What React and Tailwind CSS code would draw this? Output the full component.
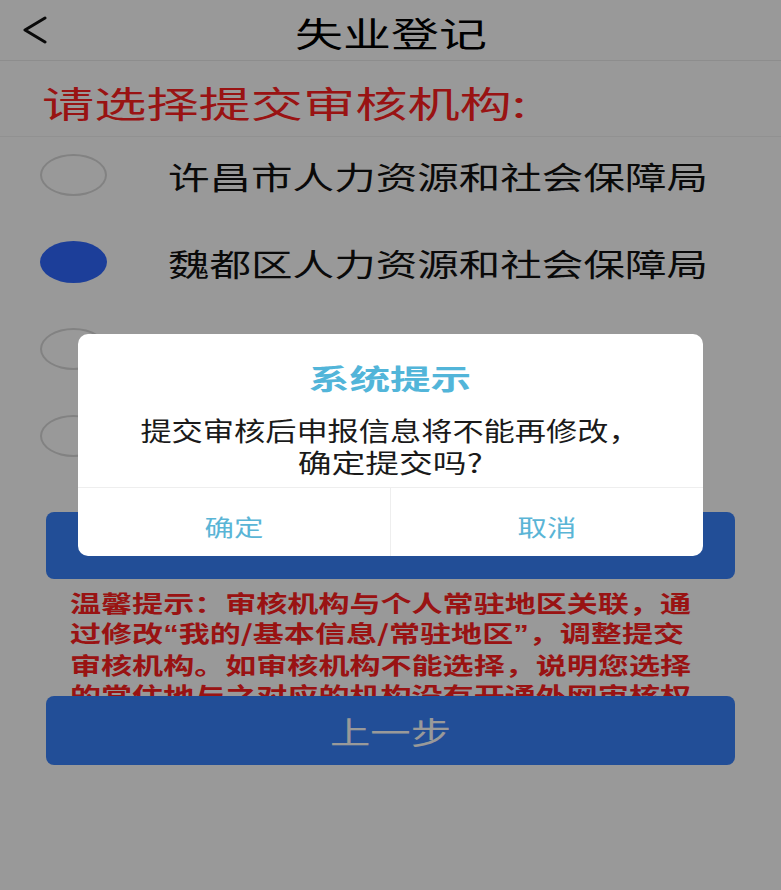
import React from 'react';

const orgs = [
  { name: '许昌市人力资源和社会保障局', checked: false },
  { name: '魏都区人力资源和社会保障局', checked: true },
  { name: '许昌市社会保险中心', checked: false },
  { name: '魏都区就业服务中心', checked: false },
];

// 引号用西文字体，避免全角引号撑开
const Q = ({ children }) => <span className="font-['Liberation_Sans',sans-serif]">{children}</span>;

const tipLines = [
  <>温馨提示：审核机构与个人常驻地区关联，通</>,
  <>过修改<Q>“</Q>我的/基本信息/常驻地区<Q>”</Q>，调整提交</>,
  <>审核机构。如审核机构不能选择，说明您选择</>,
  <>的常住地与之对应的机构没有开通外网审核权</>,
  <>限，请联系当地人社部门。</>,
];

const App = () => {
  return (
    <div className="relative h-[890px] overflow-hidden bg-white font-['Noto_Sans_CJK_SC','Noto_Sans',sans-serif]">
      {/* 顶部导航 */}
      <div className="grid h-[61px] grid-cols-[70px_1fr_70px] items-center border-b border-[#ececec]">
        <button className="flex h-full items-center pl-[22px]">
          <svg width="26" height="28" viewBox="0 0 26 28" fill="none">
            <path d="M23 2 L3 14 L23 26" stroke="#111" strokeWidth="3" strokeLinecap="round" strokeLinejoin="round" />
          </svg>
        </button>
        <div className="pt-[6px] text-center text-[34px] leading-none text-black">
          <span className="inline-block scale-x-[1.41]">失业登记</span>
        </div>
        <div />
      </div>

      {/* 标题 */}
      <div className="flex h-[76px] items-center border-b border-[#f2f2f2] pl-[42px] pt-[6px]">
        <span className="inline-block origin-left scale-x-[1.45] text-[36px] leading-none text-[#ff2020]">
          请选择提交审核机构:
        </span>
      </div>

      {/* 机构列表 */}
      <div className="flex flex-col gap-[11px]">
        {orgs.map((org) => (
          <div key={org.name} className="flex h-[76px] items-center pl-[40px]">
            <div
              className={
                org.checked
                  ? 'h-[42px] w-[67px] shrink-0 rounded-[50%] bg-[#2f68ff]'
                  : 'h-[42px] w-[67px] shrink-0 rounded-[50%] border-2 border-[#d9d9d9]'
              }
            />
            <span className="ml-[61px] inline-block origin-left scale-x-[1.34] whitespace-nowrap text-[31px] leading-none text-[#111]">
              {org.name}
            </span>
          </div>
        ))}
      </div>

      {/* 提交按钮 */}
      <button className="mx-[46px] mt-[38px] flex h-[67px] w-[689px] items-center justify-center rounded-[8px] bg-[#3a83fc] pb-[10px]">
        <span className="inline-block scale-x-[1.35] text-[28px] leading-none text-white">提交审核</span>
      </button>

      {/* 温馨提示 */}
      <div className="mt-[8px] h-[109px] overflow-hidden pl-[70px] text-[23px] font-bold leading-[30px] text-[#ff2020]">
        {tipLines.map((line, i) => (
          <div key={i}>
            <span className="inline-block origin-left scale-x-[1.35] whitespace-nowrap">{line}</span>
          </div>
        ))}
      </div>

      <button className="mx-[46px] flex h-[69px] w-[689px] items-center justify-center rounded-[8px] bg-[#3a83fc]">
        <span className="inline-block scale-x-[1.3] text-[31px] leading-none text-white">上一步</span>
      </button>

      {/* 遮罩 + 弹窗 */}
      <div className="absolute inset-0 flex items-center justify-center bg-black/40">
        <div className="w-[625px] overflow-hidden rounded-[10px] bg-white">
          <div className="pt-[30px] text-center text-[28px] font-bold leading-none text-[#52b5d9]">
            <span className="inline-block scale-x-[1.45]">系统提示</span>
          </div>
          <div className="mt-[22px] pb-[9px] text-center text-[26px] leading-[32px] text-[#1a1a1a]">
            <div>
              <span className="inline-block scale-x-[1.2] whitespace-nowrap">提交审核后申报信息将不能再修改，</span>
            </div>
            <div>
              <span className="inline-block scale-x-[1.3] whitespace-nowrap">确定提交吗?</span>
            </div>
          </div>
          <div className="grid h-[69px] grid-cols-2 border-t border-[#eeeeee] text-[23px] text-[#5ab5d6]">
            <button className="flex items-center justify-center border-r border-[#eeeeee] pt-[8px]">
              <span className="inline-block scale-x-[1.28]">确定</span>
            </button>
            <button className="flex items-center justify-center pt-[8px]">
              <span className="inline-block scale-x-[1.28]">取消</span>
            </button>
          </div>
        </div>
      </div>
    </div>
  );
};

export default App;
